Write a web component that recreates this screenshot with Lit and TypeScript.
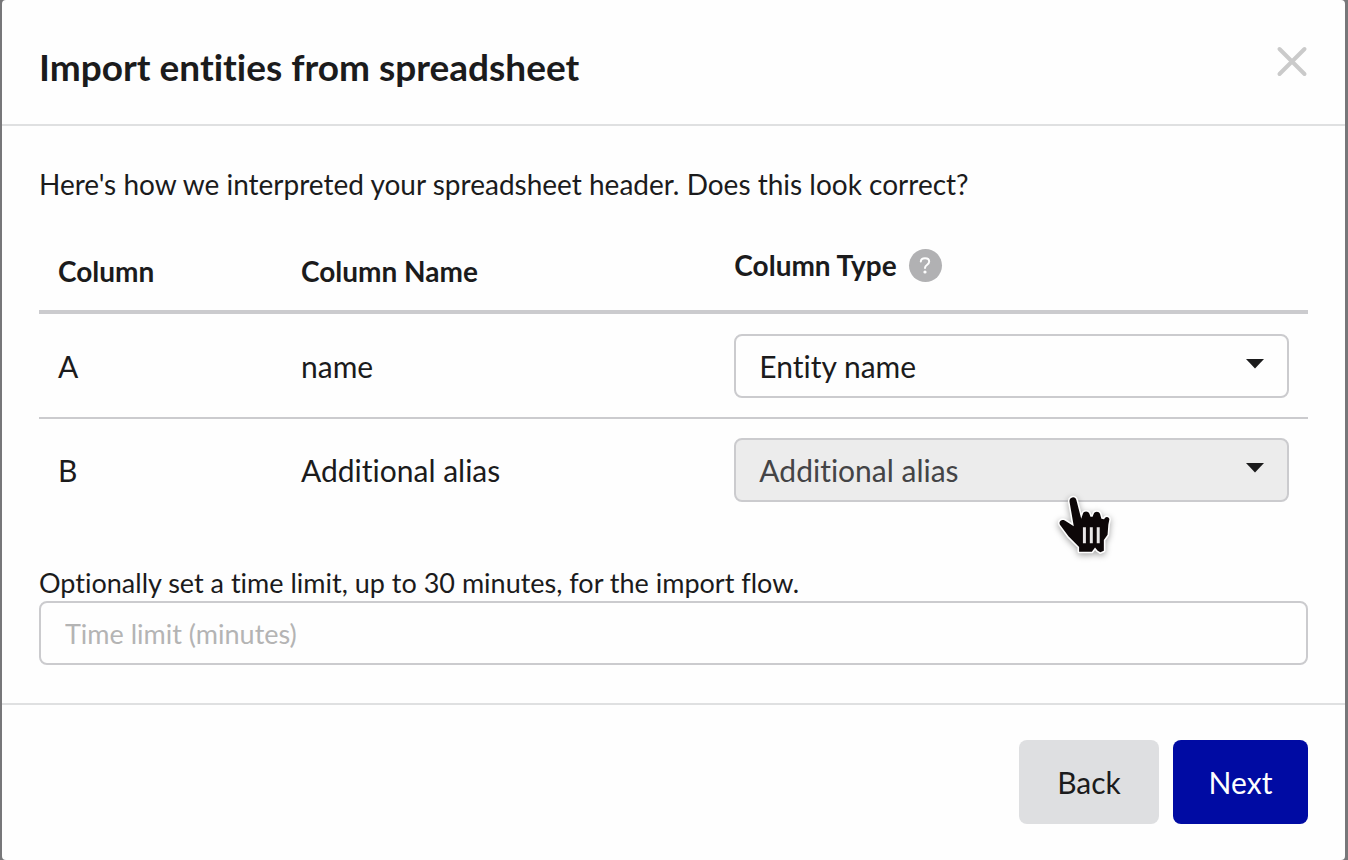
import { LitElement, html, css } from "lit";
import { customElement, state } from "lit/decorators.js";

interface ColumnRow {
  column: string;
  name: string;
  type: string;
  disabled: boolean;
}

const TYPES = ["Entity name", "Additional alias"];

@customElement("type-select")
class TypeSelect extends LitElement {
  static properties = {
    value: { type: String },
    label: { type: String },
    disabled: { type: Boolean },
  };

  declare value: string;
  declare label: string;
  declare disabled: boolean;

  static styles = css`
    :host {
      display: grid;
      align-items: center;
    }
    .select {
      grid-area: 1 / 1;
      appearance: none;
      box-sizing: border-box;
      width: 100%;
      height: 64px;
      margin: 0;
      padding: 0 56px 0 23px;
      border: 2px solid #cbcbce;
      border-radius: 8px;
      background: #fefefe;
      color: #1b1b1c;
      font: inherit;
      font-variant-ligatures: none;
    }
    .select:disabled {
      background: #ececec;
      color: #444446;
      opacity: 1;
    }
    .caret {
      grid-area: 1 / 1;
      justify-self: end;
      width: 18px;
      height: 10px;
      margin: 0 25px 4px 0;
      fill: #1b1b1c;
      pointer-events: none;
    }
  `;

  render() {
    return html`
      <select class="select" aria-label=${this.label} ?disabled=${this.disabled}>
        ${TYPES.map((t) => html`<option ?selected=${t === this.value}>${t}</option>`)}
      </select>
      <svg class="caret" viewBox="0 0 18 10" aria-hidden="true"><path d="M0 0h18L9 9.5z" /></svg>
    `;
  }
}

@customElement("app-root")
class AppRoot extends LitElement {
  @state() private rows: ColumnRow[] = [
    { column: "A", name: "name", type: "Entity name", disabled: false },
    { column: "B", name: "Additional alias", type: "Additional alias", disabled: true },
  ];

  static styles = css`
    :host {
      display: block;
      box-sizing: border-box;
      min-height: 100vh;
      padding: 0 3px 0 2px;
      background: #777779;
      color: #1b1b1c;
      font-family: Lato, "Liberation Sans", sans-serif;
      font-size: 28px;
      line-height: 34px;
      font-variant-ligatures: none;
    }
    .dialog {
      display: flex;
      flex-direction: column;
      box-sizing: border-box;
      min-height: 100vh;
      border-radius: 4px;
      background: #fefefe;
    }
    .header {
      display: flex;
      justify-content: space-between;
      align-items: flex-start;
      padding: 45px 37px 35px;
      border-bottom: 2px solid #dfe0e1;
    }
    .title {
      margin: 0;
      font-size: 37px;
      line-height: 44px;
      font-weight: 700;
    }
    .close {
      display: block;
      padding: 0;
      border: 0;
      background: none;
    }
    .close-icon {
      display: block;
      width: 32px;
      height: 32px;
      fill: none;
      stroke: #cacaca;
      stroke-width: 4;
      stroke-linecap: round;
    }
    .body {
      padding: 41px 37px 38px;
    }
    .intro {
      margin: 0 0 33px;
    }
    .columns {
      width: 100%;
      table-layout: fixed;
      border-collapse: separate;
      border-spacing: 0;
    }
    .col-letter {
      width: 19.15%;
    }
    .col-name {
      width: 34.15%;
    }
    .head {
      padding: 14px 19px 17px;
      border-bottom: 4px solid #cbcbce;
      text-align: left;
      font-weight: 700;
    }
    .head-type {
      display: flex;
      align-items: center;
      gap: 12px;
      margin-bottom: 11px;
    }
    .help {
      display: block;
      padding: 0;
      border: 0;
      border-radius: 50%;
      width: 33px;
      height: 33px;
      background: #b1b1b3;
    }
    .help-icon {
      display: block;
      width: 33px;
      height: 33px;
    }
    .cell {
      padding: 20px 19px 19px;
      font-size: 30px;
    }
    .row + .row .cell {
      padding-top: 19px;
      border-top: 2px solid #cbcbce;
    }
    .type {
      position: relative;
    }
    .pointer {
      position: absolute;
      left: 339px;
      top: 69px;
      width: 64px;
      height: 68px;
      pointer-events: none;
      filter: drop-shadow(0 2px 3px rgba(0, 0, 0, 0.35));
    }
    .field {
      display: flex;
      flex-direction: column;
      margin-top: 43px;
      font-size: 27px;
      line-height: 37px;
    }
    .input {
      box-sizing: border-box;
      width: 100%;
      height: 64px;
      padding: 0 24px;
      border: 2px solid #cbcbce;
      border-radius: 8px;
      background: #fefefe;
      color: #1b1b1c;
      font: inherit;
      font-variant-ligatures: none;
    }
    .input::placeholder {
      color: #b4b4b4;
      opacity: 1;
    }
    .footer {
      display: flex;
      justify-content: flex-end;
      gap: 14px;
      padding: 35px 37px 36px;
      border-top: 2px solid #dfe0e1;
    }
    .btn {
      min-width: 140px;
      padding: 24px 35px;
      border: 0;
      border-radius: 8px;
      background: #dedfe1;
      color: #1b1b1c;
      font: inherit;
      font-size: 30px;
      line-height: 36px;
    }
    .primary {
      min-width: 135px;
      background: #000ba3;
      color: #fefefe;
    }
  `;

  render() {
    return html`
      <section class="dialog" role="dialog" aria-labelledby="title">
        <header class="header">
          <h1 class="title" id="title">Import entities from spreadsheet</h1>
          <button class="close" aria-label="Close">
            <svg class="close-icon" viewBox="0 0 32 32"><path d="M3.500 4l25 25M28.500 4l-25 25" /></svg>
          </button>
        </header>
        <div class="body">
          <p class="intro">Here's how we interpreted your spreadsheet header. Does this look correct?</p>
          <table class="columns">
            <colgroup>
              <col class="col-letter" />
              <col class="col-name" />
              <col />
            </colgroup>
            <thead>
              <tr>
                <th class="head" scope="col">Column</th>
                <th class="head" scope="col">Column Name</th>
                <th class="head" scope="col">
                  <div class="head-type">
                    Column Type
                    <button class="help" aria-label="About column types">
                      <svg class="help-icon" viewBox="0 0 33 33" fill="none">
                        <path
                          d="M11.800 12.500c.2-2.100 2-3.300 4.200-3.300 2.400 0 4.200 1.300 4.200 3.400 0 1.600-.9 2.500-2.300 3.400-1.400.9-1.900 1.500-1.900 3.100"
                          stroke="#fefefe"
                          stroke-width="2"
                          stroke-linecap="round"
                        />
                        <circle cx="16" cy="23" r="1.600" fill="#fefefe" />
                      </svg>
                    </button>
                  </div>
                </th>
              </tr>
            </thead>
            <tbody>
              ${this.rows.map(
                (r) => html`
                  <tr class="row">
                    <td class="cell">${r.column}</td>
                    <td class="cell">${r.name}</td>
                    <td class="cell type">
                      <type-select
                        .value=${r.type}
                        .label=${`Type of column ${r.column}`}
                        .disabled=${r.disabled}
                      ></type-select>
                      ${r.disabled ? this.pointer() : null}
                    </td>
                  </tr>
                `
              )}
            </tbody>
          </table>
          <div class="field">
            <label for="limit">Optionally set a time limit, up to 30 minutes, for the import flow.</label>
            <input class="input" id="limit" type="text" placeholder="Time limit (minutes)" />
          </div>
        </div>
        <footer class="footer">
          <button class="btn">Back</button>
          <button class="btn primary">Next</button>
        </footer>
      </section>
    `;
  }

  private pointer() {
    return html`
      <svg class="pointer" viewBox="0 0 60 64" aria-hidden="true">
        <path
          d="M16 9.500c2-1.500 4.500-.5 5 2L25.500 29l1.500-4.500c.8-3 5-3 6.200-.3l1 2.800h2l1-2.500c1-2.800 5-2.800 6 0l1.300 4.500 2.500.5 1-1.500c1.500-1.500 4-.5 4 1.500l-1 5-.7 9.500-3.500 5V59l-3.300 1.500-2.500-1.500-2.500-3-3 4H23.500v-4.500L13.500 45.500 5.500 34.500c-1.500-3 1.500-5.500 4.500-4L18.500 36 14.500 13c-.2-1.500.3-2.700 1.500-3.500z"
          fill="#0d0708"
          stroke="#fefefe"
          stroke-width="3"
          stroke-linejoin="round"
          paint-order="stroke"
        />
        <path d="M28.500 37v15M35 37v15M41.500 37v15" stroke="#e9e6e7" stroke-width="2.800" />
      </svg>
    `;
  }
}
